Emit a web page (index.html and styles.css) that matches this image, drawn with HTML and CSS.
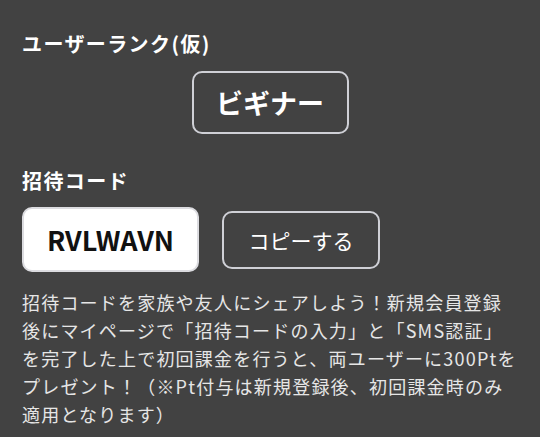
FILE: index.html
```html
<!DOCTYPE html>
<html>
<head>
  <meta charset="utf-8">
  <title>招待コード</title>
  <link rel="stylesheet" href="styles.css">
</head>
<body>
  <div class="page">
    <h2 class="title">ユーザーランク(仮)</h2>
    <div class="rank-wrap">
      <div class="rank">ビギナー</div>
    </div>

    <h2 class="title invite-title">招待コード</h2>
    <div class="code-row">
      <div class="code">RVLWAVN</div>
      <button class="copy" onclick="copyCode()">コピーする</button>
    </div>

    <p class="note">招待コードを家族や友人にシェアしよう！新規会員登録<br>後にマイページで「招待コードの入力」と「SMS認証」<br>を完了した上で初回課金を行うと、両ユーザーに300Ptを<br>プレゼント！（※Pt付与は新規登録後、初回課金時のみ<br>適用となります）</p>
  </div>

  <script>
    function copyCode() {
      let code = document.querySelector('.code').textContent;
      if (navigator.clipboard) {
        navigator.clipboard.writeText(code);
      }
    }
  </script>
</body>
</html>
```

FILE: styles.css
```css
body {
  margin: 0;
  background-color: #424242;
  color: #ffffff;
  font-family: "Noto Sans CJK JP", "Noto Sans", sans-serif;
}

.page {
  padding: 29px 22px 0;
}

.title {
  margin: 0;
  font-size: 20px;
  line-height: 30px;
  font-weight: 700;
  letter-spacing: 1.4px;
}

.rank-wrap {
  display: flex;
  justify-content: center;
  margin-top: 12px;
}

.rank {
  box-sizing: border-box;
  width: 157px;
  height: 63px;
  display: flex;
  align-items: center;
  justify-content: center;
  border: 2px solid #cfd0d6;
  border-radius: 10px;
  font-size: 27px;
  font-weight: 700;
}

.invite-title {
  margin-top: 32px;
}

.code-row {
  display: flex;
  align-items: center;
  gap: 23px;
  margin-top: 11px;
}

.code {
  box-sizing: border-box;
  width: 177px;
  height: 65px;
  display: flex;
  align-items: center;
  justify-content: center;
  background-color: #ffffff;
  border: 2px solid #dcdce0;
  border-radius: 10px;
  color: #111111;
  font-size: 27px;
  font-weight: 700;
}

.copy {
  box-sizing: border-box;
  width: 158px;
  height: 58px;
  background-color: transparent;
  border: 2px solid #cfd0d6;
  border-radius: 10px;
  color: #ffffff;
  font-family: inherit;
  font-size: 21px;
  cursor: pointer;
}

.note {
  width: 510px;
  margin: 16px 0 0;
  font-size: 18px;
  line-height: 28px;
  letter-spacing: 1.2px;
  color: #e6e6e6;
}
```
